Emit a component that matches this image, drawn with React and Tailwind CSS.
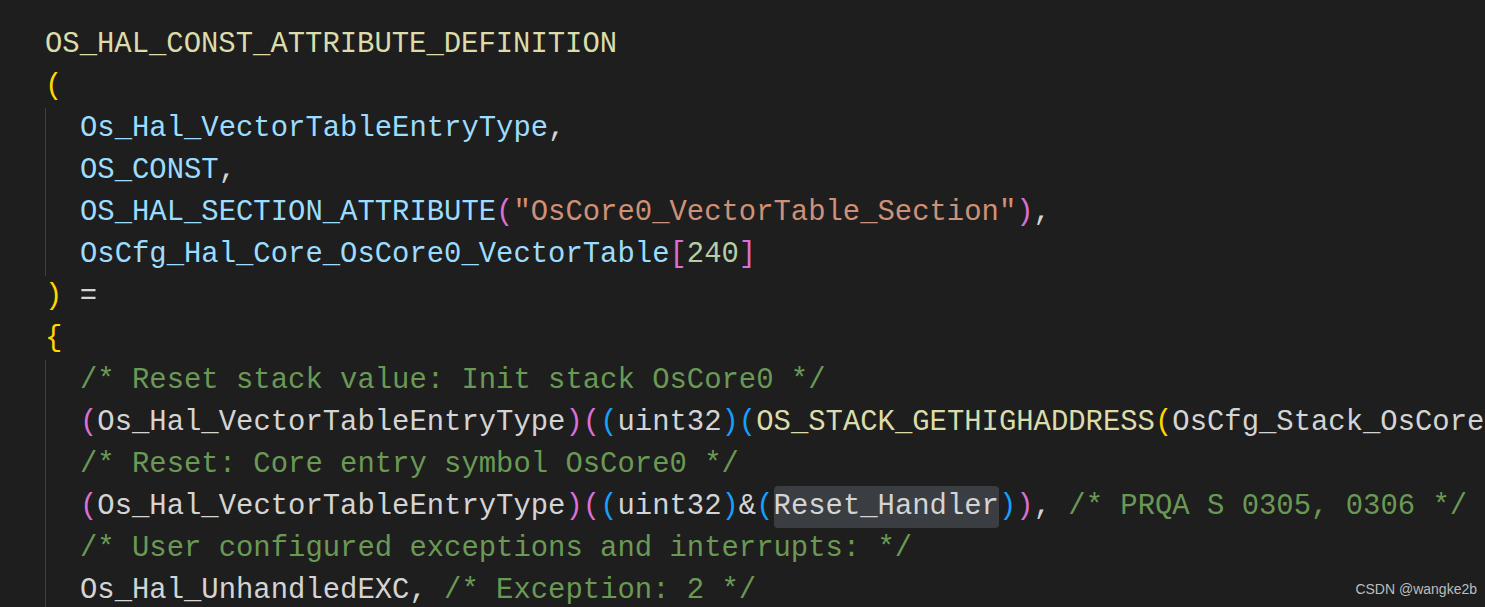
import React from "react";

const Y = ({ children }) => <span className="text-[#dcdcaa]">{children}</span>;
const V = ({ children }) => <span className="text-[#9cdcfe]">{children}</span>;
const S = ({ children }) => <span className="text-[#ce9178]">{children}</span>;
const N = ({ children }) => <span className="text-[#b5cea8]">{children}</span>;
const C = ({ children }) => <span className="text-[#6a9955]">{children}</span>;
const B1 = ({ children }) => <span className="text-[#ffd700]">{children}</span>;
const B2 = ({ children }) => <span className="text-[#da70d6]">{children}</span>;
const B3 = ({ children }) => <span className="text-[#179fff]">{children}</span>;

const Line = ({ children }) => <div className="h-[42px] leading-[42px] whitespace-pre">{children}</div>;

const Block = ({ children }) => (
  <div className="border-l border-[#404040] pl-[34px]">{children}</div>
);

const App = () => {
  return (
    <div
      className="relative w-full h-[607px] overflow-hidden bg-[#1e1e1e] pt-[24px] pl-[45px] text-[#d4d4d4] text-[28.9px]"
      style={{ fontFamily: '"Liberation Mono", "DejaVu Sans Mono", monospace' }}
    >
      <Line><Y>OS_HAL_CONST_ATTRIBUTE_DEFINITION</Y></Line>
      <Line><B1>(</B1></Line>
      <Block>
        <Line><V>Os_Hal_VectorTableEntryType</V>,</Line>
        <Line><V>OS_CONST</V>,</Line>
        <Line>
          <V>OS_HAL_SECTION_ATTRIBUTE</V><B2>(</B2><S>"OsCore0_VectorTable_Section"</S><B2>)</B2>,
        </Line>
        <Line>
          <V>OsCfg_Hal_Core_OsCore0_VectorTable</V><B2>[</B2><N>240</N><B2>]</B2>
        </Line>
      </Block>
      <Line><B1>)</B1> =</Line>
      <Line><B1>{"{"}</B1></Line>
      <Block>
        <Line><C>/* Reset stack value: Init stack OsCore0 */</C></Line>
        <Line>
          <B2>(</B2>Os_Hal_VectorTableEntryType<B2>)</B2><B2>(</B2><B3>(</B3>uint32<B3>)</B3><B3>(</B3><Y>OS_STACK_GETHIGHADDRESS</Y><B1>(</B1>OsCfg_Stack_OsCore0_Kernel<B1>)</B1><B3>)</B3><B2>)</B2>,
        </Line>
        <Line><C>/* Reset: Core entry symbol OsCore0 */</C></Line>
        <Line>
          <B2>(</B2>Os_Hal_VectorTableEntryType<B2>)</B2><B2>(</B2><B3>(</B3>uint32<B3>)</B3>&amp;<B3>(</B3><span className="bg-[#3a3d41] rounded-[4px] inline-block h-[42px]">Reset_Handler</span><B3>)</B3><B2>)</B2>, <C>/* PRQA S 0305, 0306 */</C>
        </Line>
        <Line><C>/* User configured exceptions and interrupts: */</C></Line>
        <Line>Os_Hal_UnhandledEXC, <C>/* Exception: 2 */</C></Line>
      </Block>
      <div
        className="absolute right-[8px] bottom-[10px] text-[14px] leading-[16px] text-[#bdbdbd]"
        style={{ fontFamily: '"Liberation Sans", Arial, sans-serif' }}
      >
        CSDN @wangke2b
      </div>
    </div>
  );
};

export default App;
